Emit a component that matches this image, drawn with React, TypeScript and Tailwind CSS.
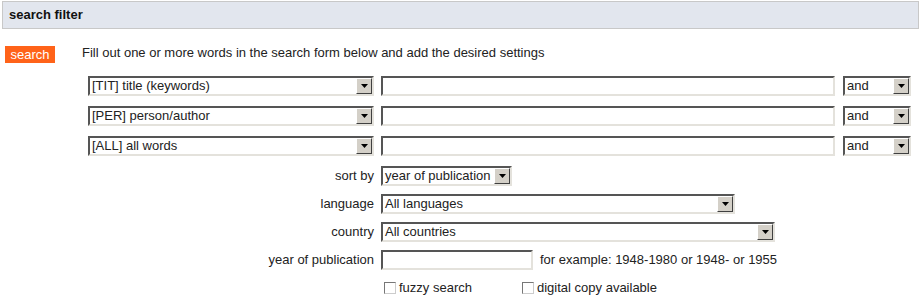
import React from 'react'

const Arrow = () => (
  <div className="flex h-[16px] w-[16px] shrink-0 items-center justify-center border border-t-white border-l-white border-r-[#404040] border-b-[#404040] bg-[#d4d0c8]">
    <svg width="7" height="4" viewBox="0 0 7 4">
      <path d="M0 0h7L3.5 4z" fill="#000" />
    </svg>
  </div>
)

const Select = ({ value, className }: { value: string; className: string }) => (
  <div
    className={`flex h-[20px] items-center border-2 border-t-[#555] border-l-[#555] border-r-[#e4e2dc] border-b-[#e4e2dc] bg-white ${className}`}
  >
    <span className="flex-1 truncate pl-[2px] leading-[16px]">{value}</span>
    <Arrow />
  </div>
)

const TextInput = ({ className }: { className: string }) => (
  <div
    className={`h-[20px] border-2 border-t-[#555] border-l-[#555] border-r-[#e4e2dc] border-b-[#e4e2dc] bg-white ${className}`}
  />
)

const Check = ({ label }: { label: string }) => (
  <label className="flex items-center gap-[3px]">
    <span className="h-[12px] w-[12px] border border-t-[#777] border-l-[#777] border-r-[#ccc] border-b-[#ccc] bg-white" />
    <span>{label}</span>
  </label>
)

const rows = ['[TIT] title (keywords)', '[PER] person/author', '[ALL] all words']

export default function App() {
  return (
    <div className="w-[920px] bg-white font-['Liberation_Sans',Arial,sans-serif] text-[13px] text-[#222]">
      <div className="ml-[2px] mr-[1px] mt-[1px] h-[28px] border border-[#c8c8c8] bg-[#e2e6ee] pl-[6px] font-bold leading-[26px] text-[#111]">
        search filter
      </div>

      <div className="flex pt-[17px]">
        <div className="ml-[5px] w-[77px] shrink-0">
          <div className="h-[17px] w-[50px] bg-[#ff6319] text-center leading-[17px] text-white">search</div>
        </div>

        <div className="flex-1">
          <p className="h-[17px] leading-[14px]">
            Fill out one or more words in the search form below and add the desired settings
          </p>

          <div className="mt-[13px] flex flex-col gap-[10px] pl-[6px]">
            {rows.map((r) => (
              <div key={r} className="flex items-center">
                <Select value={r} className="w-[286px]" />
                <TextInput className="ml-[7px] w-[454px]" />
                <Select value="and" className="ml-[8px] w-[68px]" />
              </div>
            ))}
          </div>

          <div className="mt-[10px] grid grid-cols-[292px_1fr] items-center gap-x-[7px] gap-y-[8px]">
            <span className="text-right">sort by</span>
            <Select value="year of publication" className="h-[19px] w-[131px]" />

            <span className="text-right">language</span>
            <Select value="All languages" className="h-[19px] w-[354px]" />

            <span className="text-right">country</span>
            <Select value="All countries" className="h-[19px] w-[394px]" />

            <span className="text-right">year of publication</span>
            <div className="flex items-center">
              <TextInput className="w-[152px]" />
              <span className="ml-[7px]">for example: 1948-1980 or 1948- or 1955</span>
            </div>

            <span />
            <div className="flex items-center">
              <div className="ml-[3px] w-[138px]">
                <Check label="fuzzy search" />
              </div>
              <Check label="digital copy available" />
            </div>
          </div>
        </div>
      </div>
    </div>
  )
}
